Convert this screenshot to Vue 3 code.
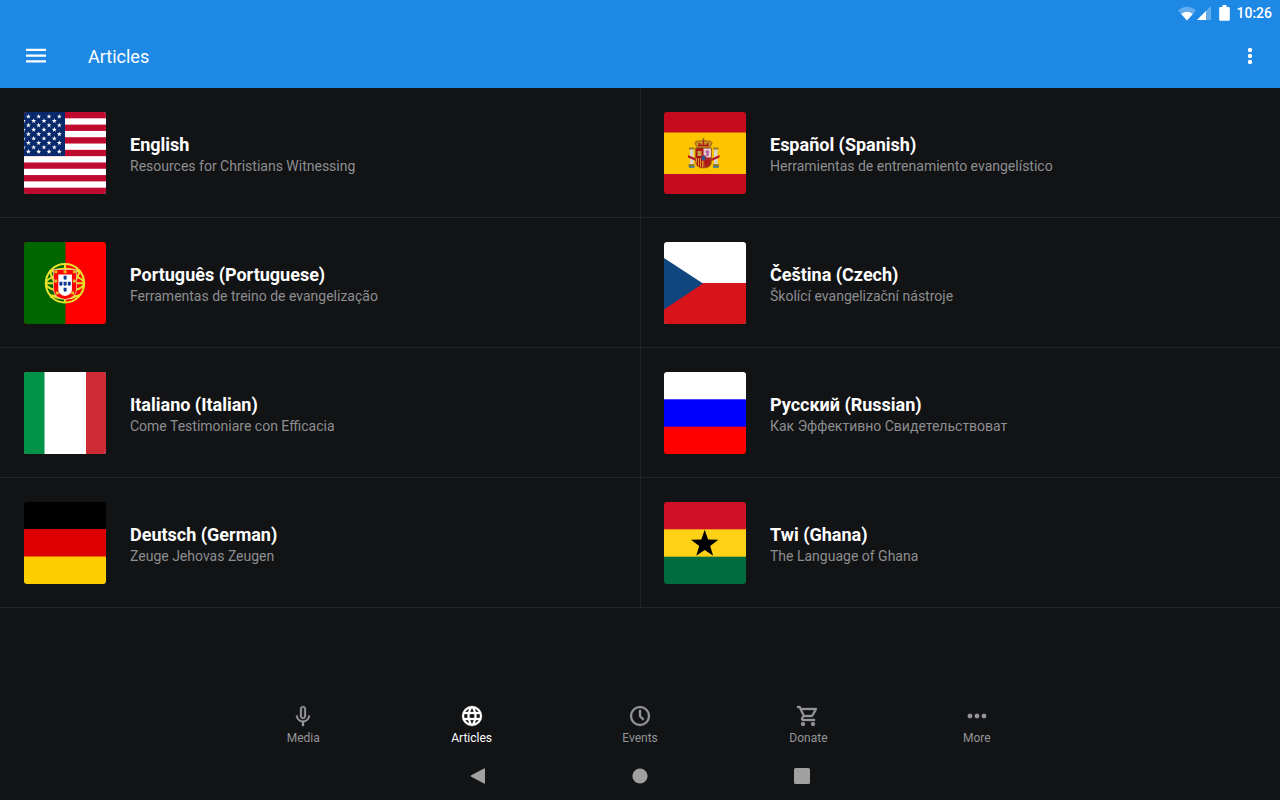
<script setup>
import { ref } from 'vue'

const languages = [
  { id: 'us', title: 'English', note: 'Resources for Christians Witnessing' },
  { id: 'es', title: 'Español (Spanish)', note: 'Herramientas de entrenamiento evangelístico' },
  { id: 'pt', title: 'Português (Portuguese)', note: 'Ferramentas de treino de evangelização' },
  { id: 'cz', title: 'Čeština (Czech)', note: 'Školící evangelizační nástroje' },
  { id: 'it', title: 'Italiano (Italian)', note: 'Come Testimoniare con Efficacia' },
  { id: 'ru', title: 'Русский (Russian)', note: 'Как Эффективно Свидетельствоват' },
  { id: 'de', title: 'Deutsch (German)', note: 'Zeuge Jehovas Zeugen' },
  { id: 'gh', title: 'Twi (Ghana)', note: 'The Language of Ghana' }
]

const tabs = [
  { name: 'Media', icon: 'M12 15c1.66 0 3-1.34 3-3V5c0-1.66-1.34-3-3-3S9 3.34 9 5v7c0 1.66 1.34 3 3 3zm-1.2-10.1c0-.7.5-1.3 1.200-1.300s1.200.6 1.200 1.300v7.200c0 .7-.5 1.300-1.200 1.300s-1.200-.6-1.200-1.300zM17.3 11.500c0 3-2.540 5.100-5.300 5.100s-5.300-2.100-5.300-5.100H5c0 3.410 2.720 6.230 6 6.720V22h2v-3.780c3.280-.48 6-3.300 6-6.720z' },
  { name: 'Articles', icon: 'M12 2a10 10 0 1 0 0 20 10 10 0 0 0 0-20zm6.9 6h-3a15.700 15.700 0 0 0-1.3-3.600A8 8 0 0 1 18.900 8zM12 4c.8 1.200 1.500 2.500 1.900 4h-3.800c.4-1.500 1.100-2.800 1.900-4zM4.300 14a8.200 8.200 0 0 1 0-4h3.300a16.500 16.500 0 0 0 0 4zm.8 2h3c.3 1.250.8 2.450 1.300 3.600A8 8 0 0 1 5.100 16zm3-8h-3a8 8 0 0 1 4.300-3.600C8.900 5.550 8.400 6.750 8.100 8zM12 20c-.8-1.200-1.500-2.500-1.900-4h3.800c-.4 1.500-1.100 2.800-1.900 4zm2.300-6H9.700a14.700 14.700 0 0 1 0-4h4.600a14.700 14.700 0 0 1 0 4zm.3 5.600c.6-1.150 1-2.350 1.300-3.600h3a8 8 0 0 1-4.300 3.600zM16.400 14a16.500 16.500 0 0 0 0-4h3.300a8.200 8.200 0 0 1 0 4z' },
  { name: 'Events', icon: 'M12 2a10 10 0 1 0 0 20 10 10 0 0 0 0-20zm0 18a8 8 0 1 1 0-16 8 8 0 0 1 0 16zM13 6h-2v6.500l3.900 3.900 1.400-1.400-3.300-3.300z' },
  { name: 'Donate', icon: 'M15.550 13c.75 0 1.410-.41 1.750-1.030l3.580-6.490A1 1 0 0 0 20.010 4H5.210l-.94-2H1v2h2l3.600 7.590-1.350 2.440C4.520 15.370 5.480 17 7 17h12v-2H7l1.100-2h7.450zM6.160 6h12.150l-2.760 5H8.530L6.160 6zM7 18a2 2 0 1 0 0 4 2 2 0 0 0 0-4zm10 0a2 2 0 1 0 0 4 2 2 0 0 0 0-4z' },
  { name: 'More', icon: 'M5 9.700a2.300 2.300 0 1 0 0 4.600 2.300 2.300 0 0 0 0-4.600zm7 0a2.300 2.300 0 1 0 0 4.600 2.300 2.300 0 0 0 0-4.600zm7 0a2.300 2.300 0 1 0 0 4.600 2.300 2.300 0 0 0 0-4.600z' }
]

const active = ref('Articles')

function starPoints(cx, cy, r) {
  return Array.from({ length: 10 }, (_, i) => {
    const a = (Math.PI / 5) * i - Math.PI / 2
    const d = i % 2 ? r * 0.4 : r
    return `${(cx + d * Math.cos(a)).toFixed(2)},${(cy + d * Math.sin(a)).toFixed(2)}`
  }).join(' ')
}

const unionStars = []
for (let row = 0; row < 9; row++) {
  for (let col = 0; col < 4; col++) {
    unionStars.push(starPoints((row % 2 ? -0.6 : 4.4) + col * 10.3, 4.5 + row * 4.4, 2.6))
  }
}
const ghanaStar = starPoints(40.7, 42.2, 14.4)
</script>

<template>
  <div class="app">
    <header class="top">
      <div class="status">
        <svg class="wifi" width="18" height="16" viewBox="0 0 18 16" aria-hidden="true">
          <path d="M0 5.500Q9-2 18 5.500L9 15.500z" fill="#fff" opacity=".3" />
          <path d="M3.200 9Q9 4.500 14.800 9L9 15.500z" fill="#fff" />
        </svg>
        <svg class="signal" width="14" height="14" viewBox="0 0 14 14" aria-hidden="true">
          <path d="M0 14L14 0V14z" fill="#fff" opacity=".3" />
          <path d="M0 14L9 5V14z" fill="#fff" />
        </svg>
        <svg class="battery" width="11" height="16" viewBox="0 0 11 16" aria-hidden="true">
          <path d="M3.500 0h4v2H9.600q1.200 0 1.200 1.200V14.600q0 1.200-1.200 1.200H1.400q-1.200 0-1.200-1.200V3.200Q.2 2 1.400 2h2.100z" fill="#fff" />
        </svg>
        <time>10:26</time>
      </div>
      <div class="toolbar">
        <button class="tool" type="button" aria-label="Open menu">
          <svg width="24" height="24" viewBox="0 0 24 24"><path d="M2 4.800h20V7H2zm0 5.700h20v2.200H2zm0 5.700h20v2.200H2z" fill="currentColor" /></svg>
        </button>
        <h1>Articles</h1>
        <button class="tool" type="button" aria-label="More options">
          <svg width="24" height="24" viewBox="0 0 24 24" fill="currentColor"><circle cx="12" cy="6" r="2.200" /><circle cx="12" cy="12" r="2.200" /><circle cx="12" cy="18" r="2.200" /></svg>
        </button>
      </div>
    </header>

    <main class="grid">
      <a v-for="lang in languages" :key="lang.id" class="card" href="#">
        <span class="flag">
          <svg viewBox="0 0 82 82" aria-hidden="true">
            <g v-if="lang.id === 'us'">
              <rect width="82" height="82" fill="#fff" />
              <rect v-for="n in 7" :key="n" :y="(n - 1) * 12.615" width="82" height="6.310" fill="#bf0a30" />
              <rect width="41" height="44" fill="#08296b" />
              <polygon v-for="(points, i) in unionStars" :key="'s' + i" :points="points" fill="#fff" />
            </g>
            <g v-else-if="lang.id === 'es'">
              <rect width="82" height="82" fill="#c60b1e" />
              <rect y="20.500" width="82" height="41.500" fill="#ffc400" />
              <path d="M26 37h3.500v15H26zM50 37h3.500v15H50z" fill="#d8d5cc" />
              <path d="M25 35.500h5.500v2H25zM49 35.500h5.500v2H49zM24.500 52h6v3h-6zM49 52h6v3h-6z" fill="#967d25" />
              <path d="M25 54h5.500v1.800H25zM49 54h5.500v1.800H49z" fill="#347b9b" />
              <path d="M24 43l8 3.500v2.500l-8-3.500zM55.500 43l-8 3.500v2.500l8-3.500z" fill="#b71824" />
              <path d="M31.500 36h16v13q0 7-8 7t-8-7z" fill="#ad1519" stroke="#8a681b" stroke-width=".7" />
              <path d="M39.500 36.500h7.500v9h-7.500z" fill="#e5cbd0" />
              <path d="M43 38l2 1-.5 5H42l.5-3-1.500-1z" fill="#b464a0" />
              <path d="M33.500 39h4v5h-4z" fill="#c8a03d" />
              <path d="M32 46h7.500v9.500q-7-.5-7.500-6.500z" fill="#d99823" />
              <path d="M33.500 46v8M35.500 46v9M37.500 46v9.500" stroke="#ad1519" stroke-width="1" />
              <path d="M40.500 47h5.500v4l-5.500 4z" fill="#ad1519" stroke="#bd8429" stroke-width=".6" stroke-dasharray="1 1" />
              <circle cx="39.500" cy="46" r="2.500" fill="#265a9b" stroke="#ad1519" stroke-width=".8" />
              <path d="M33 35.500l-2.300-4.500q1-3 5.300-2 3.500-2 7 0 4.300-1 5.300 2L46 35.500z" fill="#c58a20" stroke="#8a5d17" stroke-width=".7" />
              <path d="M34 33.500h11M35 31l2 3M39.500 28v6M44 31l-2 3" stroke="#ad1519" stroke-width="1.300" />
              <path d="M39.500 26v3M38.500 27h2" stroke="#78611e" stroke-width=".8" />
            </g>
            <g v-else-if="lang.id === 'pt'">
              <rect width="82" height="82" fill="#f00" />
              <rect width="41.500" height="82" fill="#060" />
              <g fill="none" stroke="#e8e32a" stroke-width="2">
                <circle cx="41" cy="41.300" r="19.200" />
                <ellipse cx="41" cy="41.300" rx="19" ry="8" />
                <path d="M41 22v38M22 41.300h38M26 30q15-7 30 0M26 53q15 7 30 0M26 28q3 20 28 27M56 28Q51 48 26 55" />
              </g>
              <path d="M29.500 27.500h23v19.500q0 9-11.500 10.500-11.500-1.500-11.500-10.500z" fill="#f00" stroke="#f3d9c0" stroke-width=".7" />
              <path d="M34.300 32.500h13.600v15.200q0 5-6.800 6.300-6.800-1.300-6.800-6.300z" fill="#fff" />
              <g fill="#e8b923"><path v-for="p in ['30.3 28.3', '39.6 28.3', '48.900 28.300', '30.200 37.500', '48.900 37.500', '31.800 49.500', '47.300 49.500']" :key="p" :transform="`translate(${p})`" d="M0 0h3v3H0z" /></g>
              <g fill="#123a91"><path v-for="p in ['39.6 33.8', '35.400 39.800', '39.600 39.800', '43.800 39.800', '39.600 45.800']" :key="p" :transform="`translate(${p})`" d="M0 0h3v2.500q0 1.500-1.500 1.500T0 2.500z" /></g>
            </g>
            <g v-else-if="lang.id === 'cz'">
              <rect width="82" height="82" fill="#fff" />
              <rect y="41" width="82" height="41" fill="#d7141a" />
              <path d="M0 16l39 25.500L0 67.500z" fill="#11457e" />
            </g>
            <g v-else-if="lang.id === 'it'">
              <rect width="82" height="82" fill="#fff" />
              <rect width="20.500" height="82" fill="#009246" />
              <rect x="62" width="20" height="82" fill="#ce2b37" />
            </g>
            <g v-else-if="lang.id === 'ru'">
              <rect width="82" height="28" fill="#fff" />
              <rect y="27.300" width="82" height="28" fill="#00f" />
              <rect y="54.700" width="82" height="27.300" fill="#f00" />
            </g>
            <g v-else-if="lang.id === 'de'">
              <rect width="82" height="28" fill="#000" />
              <rect y="27" width="82" height="28" fill="#d00" />
              <rect y="54.500" width="82" height="27.500" fill="#ffce00" />
            </g>
            <g v-else>
              <rect width="82" height="28" fill="#ce1126" />
              <rect y="27.300" width="82" height="28" fill="#fcd116" />
              <rect y="54.700" width="82" height="27.300" fill="#006b3f" />
              <polygon :points="ghanaStar" fill="#000" />
            </g>
          </svg>
        </span>
        <span class="text">
          <strong>{{ lang.title }}</strong>
          <span class="note">{{ lang.note }}</span>
        </span>
      </a>
    </main>

    <footer class="bottom">
      <nav class="tabs" aria-label="Sections">
        <a v-for="tab in tabs" :key="tab.name" href="#" class="tab" :class="{ current: tab.name === active }" @click.prevent="active = tab.name">
          <svg width="24" height="24" viewBox="0 0 24 24" aria-hidden="true"><path :d="tab.icon" fill="currentColor" fill-rule="evenodd" stroke="currentColor" stroke-width=".3" /></svg>
          <span>{{ tab.name }}</span>
        </a>
      </nav>
      <div class="system">
        <button type="button" aria-label="Back"><svg width="18" height="18" viewBox="0 0 18 18"><path d="M15 1.500q1-.5 1 .7v13.600q0 1.200-1 .7L2.200 9.700q-1-.7 0-1.400z" fill="currentColor" /></svg></button>
        <button type="button" aria-label="Home"><svg width="18" height="18" viewBox="0 0 18 18"><circle cx="9" cy="9" r="7.600" fill="currentColor" /></svg></button>
        <button type="button" aria-label="Recent apps"><svg width="18" height="18" viewBox="0 0 18 18"><rect x="1" y="1" width="16" height="16" rx="1.500" fill="currentColor" /></svg></button>
      </div>
    </footer>
  </div>
</template>

<style>
body {
  margin: 0;
  background: #121315;
}
</style>

<style scoped>
.app {
  display: flex;
  flex-direction: column;
  min-height: 100vh;
  background: #121315;
  color: #fff;
  font-family: Roboto, "Liberation Sans", sans-serif;
}
a {
  color: inherit;
  text-decoration: none;
}
svg {
  display: block;
}
button {
  display: grid;
  place-items: center;
  padding: 0;
  border: 0;
  background: none;
  color: inherit;
}
.top {
  background: #1e88e5;
}
.status {
  display: flex;
  align-items: center;
  justify-content: flex-end;
  height: 24px;
  padding: 1px 8px 0 0;
  box-sizing: border-box;
  font-size: 14px;
  font-weight: 500;
}
.signal {
  margin: 0 8px 0 1px;
}
.battery {
  margin-right: 6px;
}
.toolbar {
  display: flex;
  align-items: center;
  height: 64px;
  padding: 0 6px 0 12px;
}
.tool {
  width: 48px;
  height: 48px;
}
h1 {
  flex: 1;
  margin: 0 0 0 28px;
  padding-top: 2px;
  font-size: 18px;
  font-weight: 400;
  line-height: 24px;
}
.grid {
  display: grid;
  grid-template-columns: 1fr 1fr;
}
.card {
  display: flex;
  align-items: center;
  gap: 24px;
  padding: 24px 24px 23px;
  border-bottom: 1px solid #232427;
}
.card:nth-child(even) {
  padding-left: 23px;
  border-left: 1px solid #232427;
}
.flag {
  flex: none;
  width: 82px;
  height: 82px;
  overflow: hidden;
  border-radius: 3px;
}
.text {
  display: flex;
  flex-direction: column;
  padding-top: 4px;
}
strong {
  font-size: 18px;
  font-weight: 700;
  line-height: 22px;
}
.note {
  color: #8d8e90;
  font-size: 14px;
  line-height: 20px;
}
.bottom {
  margin-top: auto;
}
.tabs {
  display: flex;
  max-width: 842px;
  height: 56px;
  margin: 0 auto;
}
.tab {
  display: flex;
  flex: 1;
  flex-direction: column;
  align-items: center;
  padding-top: 8px;
  color: #949597;
  font-size: 12px;
  line-height: 20px;
}
.tab.current {
  color: #fff;
}
.system {
  display: flex;
  justify-content: center;
  gap: 114px;
  height: 48px;
  color: #a0a0a0;
}
.system button {
  width: 48px;
}
</style>
